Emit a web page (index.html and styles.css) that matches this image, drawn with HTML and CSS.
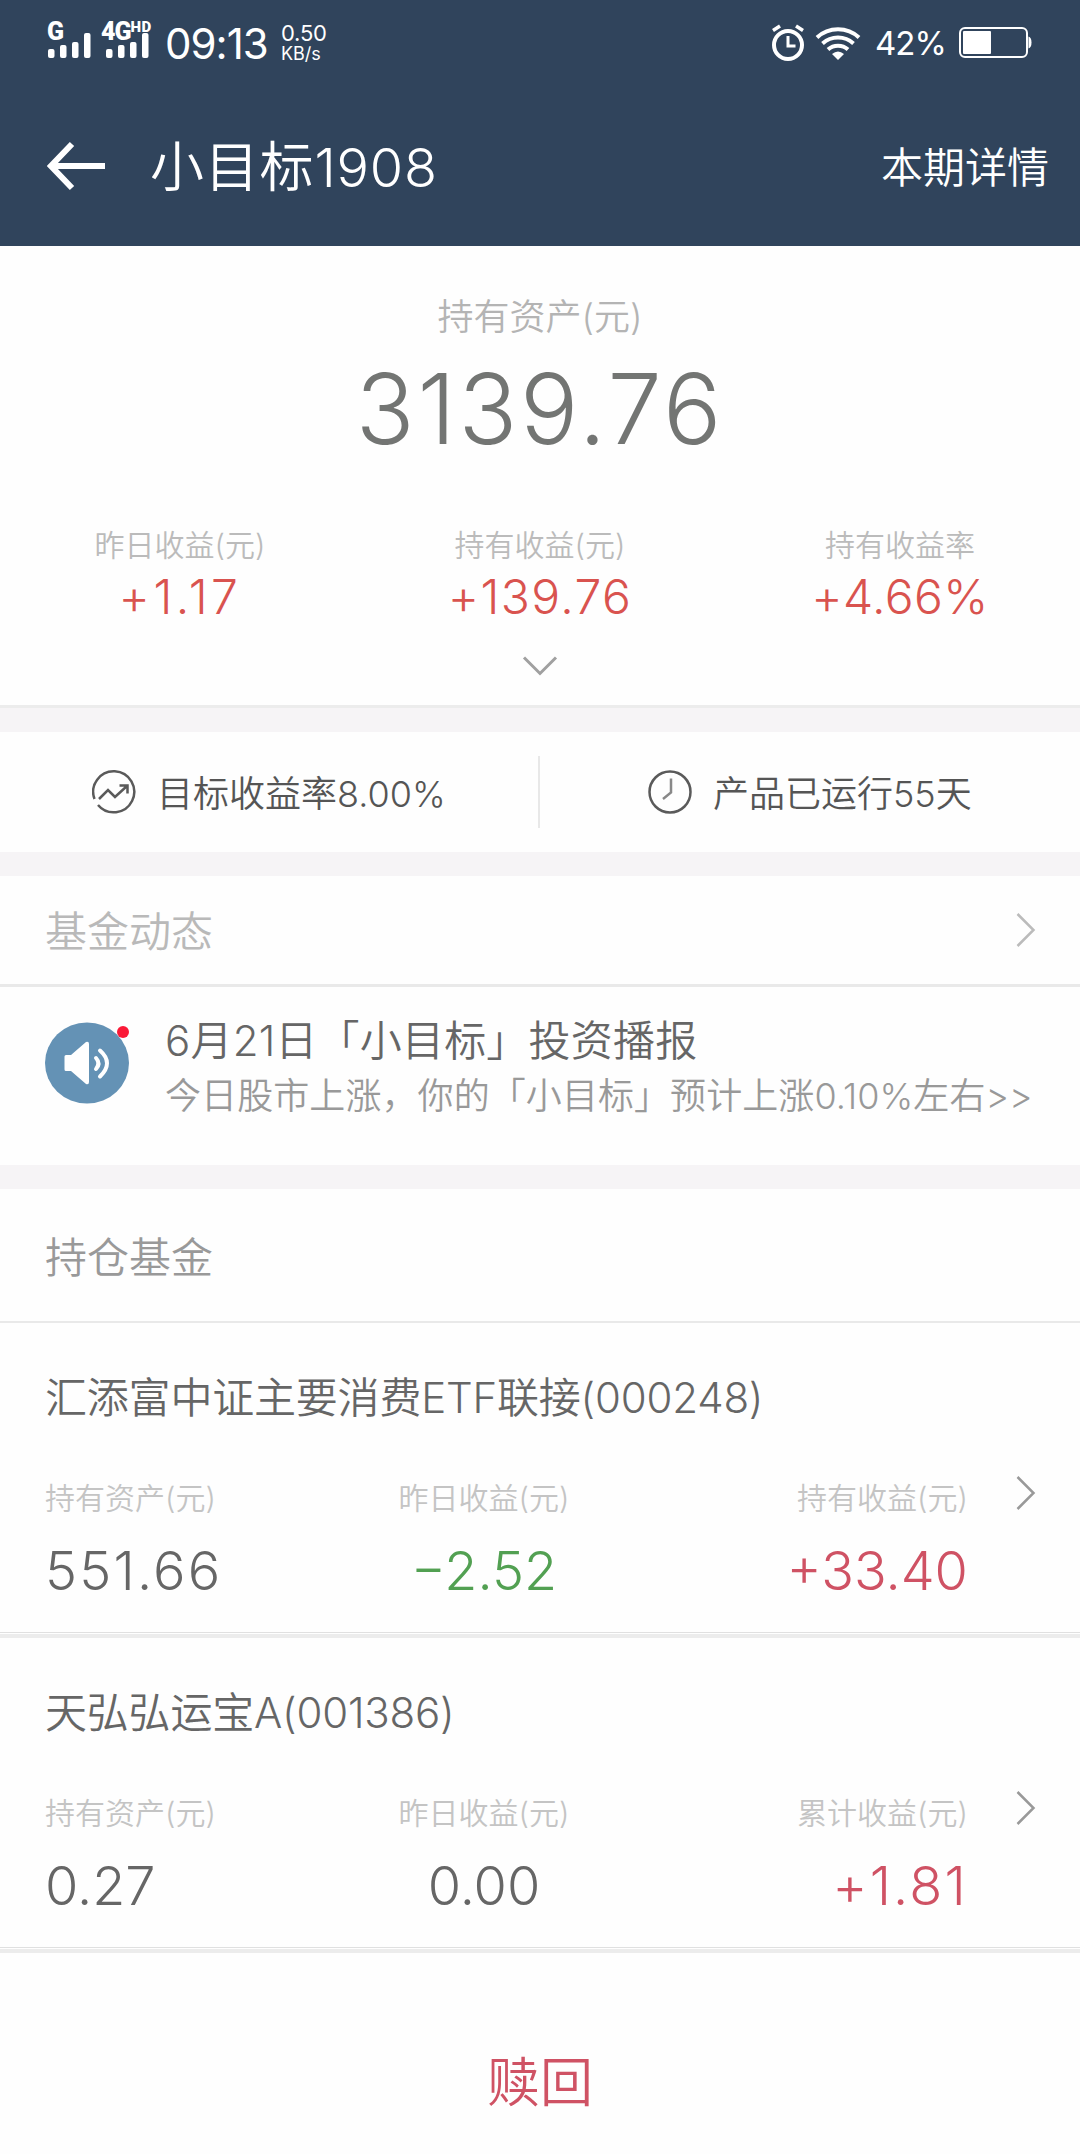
FILE: index.html
```html
<!DOCTYPE html>
<html lang="zh-CN">
    <head>
        <meta charset="utf-8">
        <title>小目标1908</title>
        <link rel="stylesheet" href="styles.css">
    </head>

    <body>
        <header>
            <div class="statusBar">
                <div class="signal">
                    <span class="network">G</span>
                    <svg width="44" height="25" viewBox="0 0 44 25" fill="#fff">
                        <rect x="0" y="16" width="6.5" height="9" rx="2"/>
                        <rect x="12" y="12" width="6.5" height="13" rx="2"/>
                        <rect x="24" y="9" width="6.5" height="16" rx="2"/>
                        <rect x="36" y="0" width="6.5" height="25" rx="2"/>
                    </svg>
                </div>
                <div class="signal signalSecond">
                    <span class="network">4G<sup>HD</sup></span>
                    <svg width="44" height="25" viewBox="0 0 44 25" fill="#fff">
                        <rect x="0" y="16" width="6.5" height="9" rx="2"/>
                        <rect x="12" y="12" width="6.5" height="13" rx="2"/>
                        <rect x="24" y="9" width="6.5" height="16" rx="2"/>
                        <rect x="36" y="0" width="6.5" height="25" rx="2"/>
                    </svg>
                </div>
                <span class="time">09:13</span>
                <div class="speed">
                    <span class="speedValue">0.50</span>
                    <span class="speedUnit">KB/s</span>
                </div>
                <div class="statusRight">
                    <svg class="alarm" width="34" height="38" viewBox="0 0 34 38" fill="none" stroke="#fff">
                        <circle cx="17" cy="21" r="14" stroke-width="4"/>
                        <path d="M17 12v10h7.500" stroke-width="3"/>
                        <path d="M2 6.500l7-4.500M32 6.500l-7-4.500" stroke-width="3.500"/>
                    </svg>
                    <svg class="wifi" width="46" height="34" viewBox="0 0 46 34" fill="none" stroke="#fff" stroke-width="4">
                        <path d="M2 11.500a31 31 0 0 1 42 0"/>
                        <path d="M7.500 17.500a23 23 0 0 1 31 0"/>
                        <path d="M13 23.500a15 15 0 0 1 20 0"/>
                        <path d="M17 28q6-5 12 0l-6 6z" fill="#fff" stroke="none"/>
                    </svg>
                    <span class="percent">42%</span>
                    <svg class="battery" width="73" height="32" viewBox="0 0 73 32">
                        <rect x="1" y="1" width="67" height="29" rx="5" fill="none" stroke="#fff" stroke-width="2"/>
                        <rect x="4" y="4" width="28" height="23" rx="1" fill="#fff"/>
                        <path d="M69.500 9.500q3 1 3 6t-3 6z" fill="#fff"/>
                    </svg>
                </div>
            </div>
            <nav class="titleBar">
                <svg class="back" width="60" height="50" viewBox="0 0 60 50" fill="none" stroke="#fff" stroke-width="6">
                    <path d="M3 25h55M25 3L4 25l21 22"/>
                </svg>
                <h1>小目标1908</h1>
                <a class="detailLink">本期详情</a>
            </nav>
        </header>

        <section class="summary">
            <div class="assetLabel">持有资产(元)</div>
            <div class="assetValue">3139.76</div>
            <div class="stats">
                <div>
                    <div class="statLabel">昨日收益(元)</div>
                    <div class="statValue wide">+1.17</div>
                </div>
                <div>
                    <div class="statLabel">持有收益(元)</div>
                    <div class="statValue">+139.76</div>
                </div>
                <div>
                    <div class="statLabel">持有收益率</div>
                    <div class="statValue narrow">+4.66%</div>
                </div>
            </div>
            <svg class="expand" width="36" height="20" viewBox="0 0 36 20" fill="none" stroke="#a0a0a0" stroke-width="3">
                <path d="M2 1.500l16 16 16-16"/>
            </svg>
        </section>

        <section class="targets">
            <div class="target targetRate">
                <svg width="44" height="44" viewBox="0 0 44 44" fill="none" stroke="#5a5a5a" stroke-width="2.500">
                    <path d="M2.500 29A20.500 20.500 0 1 1 6 35"/>
                    <path d="M7 29l9-9 7 7 12-11M27.500 15.500h8v8"/>
                </svg>
                <span>目标收益率8.00%</span>
            </div>
            <div class="target targetDays">
                <svg width="44" height="44" viewBox="0 0 44 44" fill="none" stroke="#5a5a5a" stroke-width="2.500">
                    <circle cx="22" cy="22" r="20.500"/>
                    <path d="M23 8.500v14l-8 6.500" stroke="#888"/>
                </svg>
                <span>产品已运行55天</span>
            </div>
        </section>

        <section class="news">
            <div class="newsHeader">
                <h2>基金动态</h2>
                <svg class="chevron" width="20" height="36" viewBox="0 0 20 36" fill="none" stroke="#bbb" stroke-width="2.500">
                    <path d="M1.500 2l16 16-16 16"/>
                </svg>
            </div>
            <div class="newsItem">
                <div class="newsIcon">
                    <svg width="84" height="82" viewBox="0 0 84 82">
                        <ellipse cx="42" cy="41" rx="42" ry="40.500" fill="#6492b5"/>
                        <path d="M21 33h5l15-13q3-1 3 2v38q0 3-3 2L26 49h-5q-1.500 0-1.500-1.500v-13q0-1.500 1.500-1.500z" fill="#fff"/>
                        <path d="M51 36q5 5.500 0 11M55 28.500q14 12.500 0 26" fill="none" stroke="#fff" stroke-width="4" stroke-linecap="round"/>
                    </svg>
                    <span class="badge"></span>
                </div>
                <div>
                    <div class="newsTitle">6月21日「小目标」投资播报</div>
                    <div class="newsText">今日股市上涨，你的「小目标」预计上涨0.10%左右&gt;&gt;</div>
                </div>
            </div>
        </section>

        <section class="holdings">
            <h2>持仓基金</h2>
            <div class="fund">
                <h3>汇添富中证主要消费ETF联接(000248)</h3>
                <div class="fundRow">
                    <div>
                        <div class="fundLabel">持有资产(元)</div>
                        <div class="fundValue wide">551.66</div>
                    </div>
                    <div>
                        <div class="fundLabel">昨日收益(元)</div>
                        <div class="fundValue down">−2.52</div>
                    </div>
                    <div>
                        <div class="fundLabel">持有收益(元)</div>
                        <div class="fundValue up">+33.40</div>
                    </div>
                    <svg class="chevron" width="20" height="36" viewBox="0 0 20 36" fill="none" stroke="#999" stroke-width="2.500">
                        <path d="M1.500 2l16 16-16 16"/>
                    </svg>
                </div>
            </div>
            <div class="fund">
                <h3>天弘弘运宝A(001386)</h3>
                <div class="fundRow">
                    <div>
                        <div class="fundLabel">持有资产(元)</div>
                        <div class="fundValue">0.27</div>
                    </div>
                    <div>
                        <div class="fundLabel">昨日收益(元)</div>
                        <div class="fundValue">0.00</div>
                    </div>
                    <div>
                        <div class="fundLabel">累计收益(元)</div>
                        <div class="fundValue wide up">+1.81</div>
                    </div>
                    <svg class="chevron" width="20" height="36" viewBox="0 0 20 36" fill="none" stroke="#999" stroke-width="2.500">
                        <path d="M1.500 2l16 16-16 16"/>
                    </svg>
                </div>
            </div>
        </section>

        <footer class="redeem">赎回</footer>
    </body>
</html>
```
FILE: styles.css
```css
* {
    box-sizing: border-box;
}

body {
    margin: 0;
    width: 1080px;
    height: 2154px;
    overflow: hidden;
    display: flex;
    flex-direction: column;
    background-color: #f6f4f6;
    font-family: Inter, "Noto Sans CJK SC", sans-serif;
    font-weight: 350;
    color: #666;
}

h1,
h2,
h3 {
    margin: 0;
    font-weight: 350;
}

svg {
    display: block;
    flex: none;
}

section,
footer {
    background-color: #fefefe;
}

header {
    height: 246px;
    background-color: #30445c;
    color: #fff;
}

.statusBar {
    height: 86px;
    padding: 22px 48px 0 48px;
    display: flex;
    align-items: flex-start;
    white-space: nowrap;
}

.signal {
    position: relative;
    width: 54px;
    height: 36px;
    display: flex;
    align-items: flex-end;
}

.signalSecond {
    width: 48px;
    margin-left: 4px;
}

.network {
    position: absolute;
    left: -1px;
    top: 0;
    font-family: Roboto, sans-serif;
    font-weight: 900;
    font-size: 25px;
    line-height: 20px;
    letter-spacing: -1px;
}

.signalSecond .network {
    left: -5px;
}

.network sup {
    font-size: 15px;
    line-height: 10px;
    vertical-align: 8px;
    letter-spacing: 0.5px;
}

.time {
    width: 104px;
    margin-left: 11px;
    font-size: 42px;
    line-height: 44px;
    font-weight: 400;
    letter-spacing: -1px;
}

.speed {
    margin-left: 12px;
    display: flex;
    flex-direction: column;
    font-weight: 400;
}

.speedValue {
    font-size: 22px;
    line-height: 22px;
    letter-spacing: -0.2px;
}

.speedUnit {
    font-size: 18px;
    line-height: 19px;
}

.statusRight {
    margin-left: auto;
    display: flex;
    align-items: flex-start;
}

.alarm {
    margin-top: 2px;
}

.wifi {
    margin: 4px 0 0 10px;
}

.percent {
    width: 72px;
    margin: 1px 12px 0 14px;
    font-size: 33px;
    line-height: 40px;
    font-weight: 400;
    letter-spacing: -1px;
}

.battery {
    margin-top: 5px;
}

.titleBar {
    height: 160px;
    padding: 0 31px 0 47px;
    display: flex;
    align-items: center;
}

.titleBar h1 {
    margin-left: 43px;
    padding-top: 4px;
    font-size: 54px;
    line-height: 60px;
    letter-spacing: 0.8px;
}

.detailLink {
    margin-left: auto;
    padding-top: 3px;
    font-size: 42px;
    line-height: 60px;
}

.summary {
    height: 462px;
    padding-top: 47px;
    border-bottom: 3px solid #ececec;
    text-align: center;
}

.assetLabel {
    font-size: 36px;
    line-height: 48px;
    color: #b4b4b4;
}

.assetValue {
    margin-top: 13px;
    font-size: 97px;
    line-height: 110px;
    letter-spacing: 2.8px;
    color: #737573;
}

.stats {
    margin-top: 61px;
    display: grid;
    grid-template-columns: repeat(3, 1fr);
}

.statLabel {
    font-size: 30px;
    line-height: 40px;
    color: #bbb;
}

.statValue {
    margin-top: 2px;
    font-size: 48px;
    line-height: 60px;
    letter-spacing: 1.4px;
    color: #d9534f;
}

.statValue.narrow {
    letter-spacing: 0.4px;
}

.statValue.wide {
    letter-spacing: 3.5px;
}

.expand {
    margin: 29px auto 0;
}

.targets {
    height: 120px;
    margin: 24px 0;
    display: grid;
    grid-template-columns: 1fr 1fr;
    align-items: center;
    font-size: 36px;
    line-height: 48px;
    color: #555;
}

.target {
    height: 72px;
    display: flex;
    align-items: center;
    gap: 21px;
    white-space: nowrap;
}

.target span {
    padding-top: 4px;
}

.targetRate {
    padding-left: 92px;
    border-right: 2px solid #e8e8e8;
}

.targetDays {
    padding-left: 108px;
}

.news {
    height: 289px;
}

.newsHeader {
    height: 111px;
    padding: 0 44px 0 45px;
    display: flex;
    align-items: center;
    justify-content: space-between;
    border-bottom: 3px solid #e9e9e9;
}

h2 {
    padding-top: 3px;
    font-size: 42px;
    line-height: 60px;
    color: #b9b9b9;
}

.newsItem {
    padding: 24px 44px 0 45px;
    display: flex;
    white-space: nowrap;
}

.newsIcon {
    position: relative;
    width: 84px;
    height: 82px;
    margin: 11px 36px 0 0;
}

.badge {
    position: absolute;
    top: 4px;
    right: 0;
    width: 12px;
    height: 12px;
    border-radius: 50%;
    background-color: #fa1937;
}

.newsTitle {
    font-size: 42px;
    line-height: 60px;
    letter-spacing: 0.2px;
}

.newsText {
    font-size: 36px;
    line-height: 51px;
    letter-spacing: 0.08px;
    color: #999;
}

.holdings {
    margin-top: 24px;
}

.holdings h2 {
    height: 134px;
    padding-left: 45px;
    line-height: 132px;
    border-bottom: 2px solid #e9e9e9;
    color: #999;
}

/* thin line, then the thick border under it */
.fund {
    height: 315px;
    padding-top: 45px;
    display: flex;
    flex-direction: column;
    border-bottom: 4px solid #ececec;
}

.fund::after {
    content: '';
    height: 1px;
    margin: auto 0 1px;
    background-color: #e0e0e0;
}

.fund h3 {
    padding-left: 45px;
    font-size: 42px;
    line-height: 60px;
    letter-spacing: -0.2px;
}

.fundRow {
    position: relative;
    width: 968px;
    margin-top: 50px;
    display: grid;
    grid-template-columns: repeat(3, 1fr);
    text-align: center;
}

.fundRow > div:nth-child(1) {
    padding-left: 45px;
    text-align: left;
}

.fundRow > div:nth-child(3) {
    text-align: right;
}

.fundRow .chevron {
    position: absolute;
    left: 1016px;
    top: -3px;
}

.fundLabel {
    font-size: 30px;
    line-height: 40px;
    color: #c4c4c4;
}

.fundValue {
    margin-top: 21px;
    font-size: 54px;
    line-height: 64px;
}

.fundValue.wide {
    letter-spacing: 2.2px;
}

.up {
    color: #cf5264;
}

.down {
    color: #52a052;
}

.redeem {
    flex: 1;
    padding-top: 98px;
    font-size: 53px;
    line-height: 64px;
    text-align: center;
    color: #cf5264;
}
```
